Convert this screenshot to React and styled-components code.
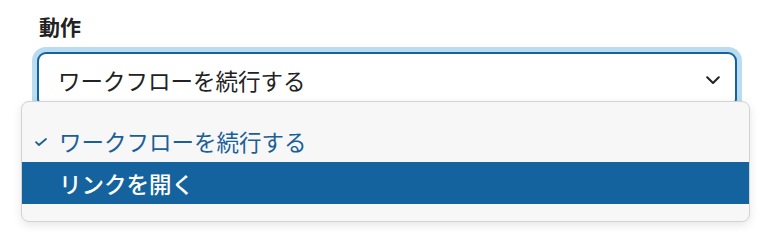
import React from "react";
import styled, { createGlobalStyle } from "styled-components";

const GlobalStyle = createGlobalStyle`
  html, body {
    margin: 0;
    padding: 0;
    background: #ffffff;
  }
  body {
    font-family: "Noto Sans CJK JP", "Noto Sans", sans-serif;
    color: #222222;
  }
`;

const options = [
  { id: "continue", label: "ワークフローを続行する" },
  { id: "open", label: "リンクを開く" },
];

function Chevron() {
  return (
    <svg width="14" height="9" viewBox="0 0 14 9" fill="none">
      <path
        d="M1.2 1.2 L7 7 L12.8 1.2"
        stroke="#222"
        strokeWidth="2"
        strokeLinecap="round"
        strokeLinejoin="round"
      />
    </svg>
  );
}

function Check() {
  return (
    <svg width="12" height="8" viewBox="0 0 12 8" fill="none">
      <path
        d="M1 4.2 L4 7 L11 1"
        stroke="currentColor"
        strokeWidth="1.8"
        strokeLinecap="round"
        strokeLinejoin="round"
      />
    </svg>
  );
}

export default function App() {
  const selected = "continue";
  const highlighted = "open";

  return (
    <>
      <GlobalStyle />
      <S.Page>
        <S.Field>
          <S.Label>動作</S.Label>
          <S.Trigger>
            <S.Value>ワークフローを続行する</S.Value>
            <Chevron />
          </S.Trigger>

          <S.Menu>
            {options.map((opt) => (
              <S.Item
                key={opt.id}
                $selected={opt.id === selected}
                $active={opt.id === highlighted}
              >
                <S.CheckSlot>{opt.id === selected && <Check />}</S.CheckSlot>
                {opt.label}
              </S.Item>
            ))}
          </S.Menu>
        </S.Field>
      </S.Page>
    </>
  );
}

const S = {
  Page: styled.div`
    width: 766px;
    height: 232px;
    padding: 12px 0 0 37px;
    box-sizing: border-box;
    overflow: hidden;
  `,

  Field: styled.div`
    position: relative;
    width: 700px;
    display: flex;
    flex-direction: column;
    gap: 12px;
  `,

  Label: styled.div`
    font-size: 21px;
    font-weight: 700;
    line-height: 28px;
    color: #222;
    padding-left: 2px;
  `,

  Trigger: styled.div`
    height: 56px;
    box-sizing: border-box;
    display: flex;
    align-items: center;
    justify-content: space-between;
    padding: 0 15px 0 19px;
    border: 2px solid #14639e;
    border-radius: 9px;
    background: #ffffff;
    box-shadow: 0 0 0 5px #b9dcf0;
  `,

  Value: styled.span`
    font-size: 22.5px;
    color: #222;
    line-height: 1;
  `,

  Menu: styled.div`
    position: absolute;
    left: -16px;
    top: 89px;
    width: 729px;
    box-sizing: border-box;
    padding: 18px 0 17px;
    background: #f7f7f7;
    border: 1px solid #d3d3d3;
    border-radius: 8px;
    box-shadow: 0 3px 10px rgba(0, 0, 0, 0.1);
  `,

  Item: styled.div`
    height: 42px;
    display: flex;
    align-items: center;
    padding: 0 13px;
    font-size: 22.5px;
    line-height: 1;
    color: ${(p) => (p.$active ? "#ffffff" : p.$selected ? "#1a5f98" : "#222")};
    background: ${(p) => (p.$active ? "#14639e" : "transparent")};
    font-weight: ${(p) => (p.$active ? 500 : 400)};
  `,

  CheckSlot: styled.span`
    width: 24px;
    display: flex;
    align-items: center;
    padding-top: 1px;
  `,
};
